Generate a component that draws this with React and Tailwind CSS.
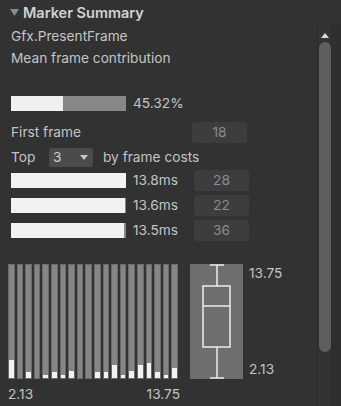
const fills = [18, 0, 6, 0, 3, 6, 3, 7, 0, 0, 6, 6, 13, 3, 7, 13, 15, 6, 3, 10];
const top = [
  ["13.8ms", 28, 100],
  ["13.6ms", 22, 99],
  ["13.5ms", 36, 98],
];

function ValueBox({ children, className = "" }) {
  return (
    <div className={`w-[55px] h-[21px] rounded-[3px] bg-[#3d3d3d] text-[#8c8c8c] flex items-center justify-center ${className}`}>
      {children}
    </div>
  );
}

export default function App() {
  return (
    <div className="w-[341px] h-[406px] bg-[#323232] text-[#c4c4c4] text-[13.7px] overflow-hidden flex flex-col" style={{ fontFamily: "Inter, 'Noto Sans', sans-serif" }}>
      <div className="h-[25px] flex items-center pl-[10px] gap-[4px] shrink-0">
        <svg width="9" height="7" viewBox="0 0 9 7"><path d="M0 0h9L4.5 7z" fill="#8a8a8a" /></svg>
        <span className="font-semibold text-[14.5px] text-[#d2d2d2]">Marker Summary</span>
      </div>

      <div className="flex flex-1 min-h-0">
        <div className="w-[317px] shrink-0 flex flex-col">
          <div className="h-[22px] flex items-center pl-[11px]">Gfx.PresentFrame</div>
          <div className="h-[23px] flex items-center pl-[11px]">Mean frame contribution</div>
          <div className="h-[24px]" />

          <div className="h-[16px] flex items-center pl-[11px] mt-[1px]">
            <div className="w-[115px] h-[15px] flex">
              <div className="w-[52px] bg-[#f0f0f0]" />
              <div className="flex-1 bg-[#888888]" />
            </div>
            <span className="ml-[7px]">45.32%</span>
          </div>

          <div className="h-[21px] flex items-center pl-[11px] mt-[11px]">
            <span className="w-[181px]">First frame</span>
            <ValueBox>18</ValueBox>
          </div>

          <div className="h-[20px] flex items-center pl-[11px] mt-[4px]">
            <span className="w-[38px]">Top</span>
            <div className="w-[44px] h-[19px] rounded-[3px] bg-[#4b4b4b] flex items-center justify-between pl-[4px] pr-[5px]">
              <span className="text-[#d0d0d0]">3</span>
              <svg width="8" height="5" viewBox="0 0 8 5"><path d="M0 0h8L4 5z" fill="#c4c4c4" /></svg>
            </div>
            <span className="ml-[10px]">by frame costs</span>
          </div>

          <div className="flex flex-col gap-[4px] mt-[3px]">
            {top.map(([ms, frame, pct]) => (
              <div key={frame} className="h-[21px] flex items-center pl-[11px]">
                <div className="w-[115px] h-[15px] flex bg-[#888888]">
                  <div className="bg-[#f2f2f2]" style={{ width: `${pct}%` }} />
                </div>
                <span className="ml-[7px] w-[61px]">{ms}</span>
                <ValueBox>{frame}</ValueBox>
              </div>
            ))}
          </div>

          <div className="flex mt-[23px] pl-[8px]">
            <div className="flex flex-col">
              <div className="flex gap-[2px] h-[115px]">
                {fills.map((f, i) => (
                  <div key={i} className="w-[6.6px] h-full bg-[#858585] border border-[#6a6a6a] flex flex-col justify-end">
                    <div className="bg-[#f2f2f2]" style={{ height: `${f}px` }} />
                  </div>
                ))}
              </div>
              <div className="flex justify-between w-[172px] mt-[7px] h-[16px] items-center">
                <span>2.13</span>
                <span>13.75</span>
              </div>
            </div>

            <div className="ml-[10px] w-[53px] h-[115px] bg-[#6e6e6e] shrink-0">
              <svg width="53" height="115" viewBox="0 0 53 115">
                <g stroke="#ededed" strokeWidth="1.5" fill="none">
                  <line x1="20" y1="1" x2="34" y2="1" />
                  <line x1="27" y1="1" x2="27" y2="22" />
                  <rect x="13" y="22" width="27" height="61" />
                  <line x1="13" y1="42" x2="40" y2="42" />
                  <line x1="27" y1="83" x2="27" y2="114" />
                  <line x1="20" y1="114" x2="34" y2="114" />
                </g>
              </svg>
            </div>
            <div className="flex flex-col justify-between h-[117px] ml-[6px] -mt-[1px]">
              <span>13.75</span>
              <span>2.13</span>
            </div>
          </div>
        </div>

        <div className="w-[14px] shrink-0 border-l border-[#2a2a2a] bg-[#333333] flex flex-col items-center">
          <svg className="mt-[8px]" width="8" height="5" viewBox="0 0 8 5"><path d="M4 0L8 5H0z" fill="#d8d8d8" /></svg>
          <div className="w-[12px] h-[310px] mt-[4px] rounded-full bg-[#5e5e5e]" />
        </div>
        <div className="flex-1 border-l border-[#2c2c2c] bg-[#2f2f2f]" />
      </div>
    </div>
  );
}
